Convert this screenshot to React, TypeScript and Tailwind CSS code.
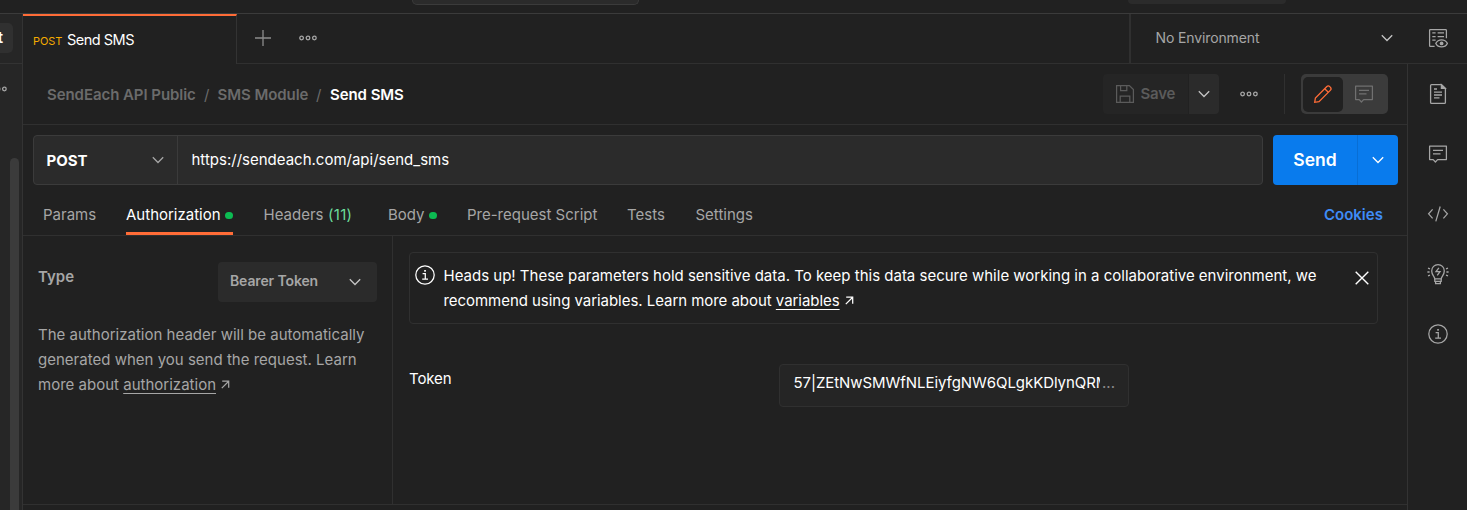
import type { ReactNode } from "react";

type IconProps = { className?: string };

function Chevron({ className = "text-[#c4c4c4]" }: IconProps) {
  return (
    <svg width="12" height="8" viewBox="0 0 12 8" fill="none" stroke="currentColor" strokeWidth="1.3" className={`shrink-0 ${className}`}>
      <path d="M0.8 1.2 L6 6.5 L11.2 1.2" />
    </svg>
  );
}

function Dots({ className = "text-[#a6a6a6]" }: IconProps) {
  return (
    <svg width="18" height="6" viewBox="0 0 18 6" fill="none" stroke="currentColor" strokeWidth="1.3" className={`shrink-0 ${className}`}>
      <circle cx="2.6" cy="3" r="1.8" />
      <circle cx="9" cy="3" r="1.8" />
      <circle cx="15.4" cy="3" r="1.8" />
    </svg>
  );
}

function CommentIcon({ className = "text-[#a6a6a6]" }: IconProps) {
  return (
    <svg width="20" height="20" viewBox="0 0 20 20" fill="none" stroke="currentColor" strokeWidth="1.25" strokeLinejoin="round" className={`shrink-0 ${className}`}>
      <path d="M1.6 2.1 H18.4 V15.6 H9.6 L7.4 18 L5.2 15.6 H1.6 Z" />
      <path d="M5 6.3 H15 M5 9.9 H12.5" />
    </svg>
  );
}

function InfoIcon({ className = "text-[#a6a6a6]" }: IconProps) {
  return (
    <svg width="20" height="20" viewBox="0 0 20 20" fill="none" stroke="currentColor" strokeWidth="1.25" className={`shrink-0 ${className}`}>
      <circle cx="10" cy="10" r="9.2" />
      <path d="M7.6 8.7 H10.3 V13.8 M7.2 14 H13" />
      <rect x="9.2" y="5" width="1.7" height="1.7" fill="currentColor" stroke="none" />
    </svg>
  );
}

function DocumentIcon() {
  return (
    <svg width="20" height="22" viewBox="0 0 20 22" fill="none" stroke="currentColor" strokeWidth="1.3" className="text-[#a6a6a6]">
      <path d="M3.6 1.6 H13.4 L17.4 5.6 V19.4 Q17.4 20.4 16.4 20.4 H3.6 Q2.6 20.4 2.6 19.4 V2.6 Q2.6 1.6 3.6 1.6 Z" />
      <path d="M13.4 1.8 V5.4 H17.2 Z" fill="currentColor" />
      <path d="M6 6 H9 M6 9.2 H14 M6 12 H14 M6 14.8 H11.5" />
    </svg>
  );
}

function CodeIcon() {
  return (
    <svg width="22" height="18" viewBox="0 0 22 18" fill="none" stroke="currentColor" strokeWidth="1.25" className="text-[#a6a6a6]">
      <path d="M5.6 4.3 L1.6 8.8 L5.6 13.3 M16.4 4.3 L20.4 8.8 L16.4 13.3 M13.2 1.5 L8.8 16.4" />
    </svg>
  );
}

function BulbIcon() {
  return (
    <svg width="22" height="22" viewBox="0 0 22 22" fill="none" stroke="currentColor" strokeWidth="1.3" className="text-[#a6a6a6]">
      <path d="M7.8 15.9 C7.8 13.4 4.7 12.3 4.7 8 C4.7 4.2 7.5 1.6 11 1.6 C14.5 1.6 17.3 4.2 17.3 8 C17.3 12.3 14.2 13.4 14.2 15.9 Z" />
      <path d="M7.8 16 V18.4 H14.2 V16 M8.6 18.6 V20.6 H13.4 V18.6" />
      <path d="M11.9 4.8 L9 8.6 H13 L10.2 12.4" />
      <path d="M1 5.2 L3 5.8 M0.4 9 H2.6 M1 12.8 L3 12.2 M21 5.2 L19 5.8 M21.6 9 H19.4 M21 12.8 L19 12.2" />
    </svg>
  );
}

function EnvironmentIcon() {
  return (
    <svg width="20" height="20" viewBox="0 0 20 20" fill="none" stroke="currentColor" strokeWidth="1.25" className="text-[#a6a6a6]">
      <path d="M6.6 18.4 H2.4 Q1.6 18.4 1.6 17.6 V2.4 Q1.6 1.6 2.4 1.6 H17.6 Q18.4 1.6 18.4 2.4 V10.2" />
      <path d="M4.3 4.9 H7.6 M9.6 4.9 H16 M4.3 8.5 H7.6 M9.6 8.5 H16 M4.3 12.1 H7.6" />
      <path d="M7.8 15.4 C10.2 10.7 17 10.7 19.4 15.4 C17 20.1 10.2 20.1 7.8 15.4 Z" />
      <circle cx="13.6" cy="15.4" r="1.9" fill="currentColor" stroke="none" />
    </svg>
  );
}

function SaveIcon() {
  return (
    <svg width="20" height="20" viewBox="0 0 20 20" fill="none" stroke="currentColor" strokeWidth="1.25" className="shrink-0">
      <path d="M1.6 1.6 H14.4 L18.4 5.6 V18.4 H1.6 Z" />
      <path d="M5.6 1.6 V6.6 H11.8 V1.6 M5.2 18.4 V12.2 H14.8 V18.4" />
    </svg>
  );
}

function PencilIcon() {
  return (
    <svg width="20" height="20" viewBox="0 0 20 20" fill="none" stroke="currentColor" strokeWidth="1.3" className="text-[#ff6c37]">
      <path d="M1.7 18.3 L2.4 14 L13.9 2.5 C15.7 0.7 19.3 4.1 17.5 6.1 L6 17.6 Z" />
      <path d="M11.7 4.7 L15.3 8.3" />
    </svg>
  );
}

function ExternalArrow({ className = "" }: IconProps) {
  return (
    <svg width="9" height="9" viewBox="0 0 9 9" fill="none" stroke="currentColor" strokeWidth="1.25" className={`mb-[3px] ml-[5px] inline-block ${className}`}>
      <path d="M1.2 1.2 H7.7 V7.8 M7.7 1.2 L0.8 8.1" />
    </svg>
  );
}

function Tab({ className, children }: { className: string; children: ReactNode }) {
  return <div className={`flex h-[50px] shrink-0 items-center whitespace-nowrap pt-[10px] ${className}`}>{children}</div>;
}

function StatusDot() {
  return <span className="ml-[4.5px] mt-px size-[7.5px] rounded-full bg-[#0cbb52]" />;
}

function Sidebar() {
  return (
    <aside className="flex w-[23px] shrink-0 flex-col border-r border-[#333333] bg-[#262626]">
      <div className="flex h-[50px] items-start overflow-hidden border-b border-[#333333] pt-[9px]">
        <div className="flex h-[30px] w-[13px] items-center justify-end rounded-r-[5px] bg-[#303030] pr-[10px] text-[15px] font-semibold text-white">
          t
        </div>
      </div>
      <div className="flex h-[50px] w-[7px] items-center justify-end overflow-hidden">
        <Dots />
      </div>
      <div className="ml-[10px] mt-[44px] w-[9px] flex-1 rounded-t-[5px] bg-[#3b3b3b]" />
    </aside>
  );
}

function TabBar() {
  return (
    <div className="flex h-[50px] shrink-0">
      <div className="flex w-[214px] items-center border-r border-t-2 border-r-[#333333] border-t-[#ff6c37] pl-[10px]">
        <span className="w-[34px] pt-[2px] text-[11px] tracking-[-0.1px] text-[#f5ab00]">POST</span>
        <span className="text-[14.5px] tracking-[-0.5px] text-white">Send SMS</span>
      </div>
      <div className="flex flex-1 items-center border-b border-[#303030] pb-px pl-[18px]">
        <svg width="16" height="16" viewBox="0 0 16 16" stroke="#8c8c8c" strokeWidth="1.3">
          <path d="M8 0 V16 M0 8 H16" />
        </svg>
        <Dots className="ml-[28px] text-[#a6a6a6]" />
      </div>
      <div className="flex w-[338px] items-center border-b border-l-2 border-[#303030] pb-[2px] pl-[24.5px]">
        <span className="w-[225.5px] text-[14px] tracking-[-0.12px] text-[#a6a6a6]">No Environment</span>
        <Chevron />
        <span className="ml-[35px]">
          <EnvironmentIcon />
        </span>
      </div>
    </div>
  );
}

function RequestHeader() {
  return (
    <div className="flex h-[61px] shrink-0 items-center border-b border-[#303030] pl-6">
      <nav className="flex flex-1 pt-[2px] text-[15px] font-semibold tracking-[-0.06px] text-[#6b6b6b]">
        <span className="w-[157px]">SendEach API Public</span>
        <span className="w-[13.5px] font-normal">/</span>
        <span className="w-[98.5px]">SMS Module</span>
        <span className="w-[14px] font-normal">/</span>
        <span className="text-white">Send SMS</span>
      </nav>
      <div className="flex h-10 w-[85px] items-center gap-[5.5px] rounded-l-[4px] bg-[#252525] pl-3 text-[15px] font-semibold tracking-[-0.2px] text-[#5b5b5b]">
        <SaveIcon />
        Save
      </div>
      <div className="ml-px flex h-10 w-[30px] items-center justify-center rounded-r-[4px] bg-[#2b2b2b]">
        <Chevron />
      </div>
      <Dots className="ml-[21px] text-[#a6a6a6]" />
      <div className="ml-[26px] h-10 w-px bg-[#303030]" />
      <div className="ml-4 mr-[19px] flex h-10 w-[87px] items-center rounded-[5px] bg-[#3b3b3b] pl-[2px]">
        <div className="flex h-[35px] w-10 items-center justify-center rounded-[5px] bg-[#212121]">
          <PencilIcon />
        </div>
        <div className="flex w-[42px] justify-center">
          <CommentIcon className="text-[#707070]" />
        </div>
      </div>
    </div>
  );
}

function UrlBar() {
  return (
    <div className="flex h-[60px] shrink-0 pl-[10px] pr-[9px] pt-[10px]">
      <div className="flex h-[50px] w-[1230px] rounded-[4px] border border-[#3b3b3b] bg-[#2b2b2b]">
        <div className="flex w-[144px] items-center border-r border-[#3b3b3b] pl-[12.5px]">
          <span className="w-[105.5px] pt-[2px] text-[15px] font-bold text-white">POST</span>
          <Chevron className="text-[#a6a6a6]" />
        </div>
        <div className="flex items-center pl-[13.5px] pt-px text-[15px] text-white">https://sendeach.com/api/send_sms</div>
      </div>
      <div className="ml-[10px] flex h-[50px] w-[125px] rounded-[4px] bg-[#097bed]">
        <div className="flex w-[85px] items-center justify-center border-r border-[#086ed5] text-[17.5px] font-semibold text-white">Send</div>
        <div className="flex flex-1 items-center justify-center">
          <Chevron className="text-white" />
        </div>
      </div>
    </div>
  );
}

function RequestTabs() {
  return (
    <div className="flex h-[51px] shrink-0 border-b border-[#303030] pl-5 text-[15px] text-[#a6a6a6]">
      <Tab className="w-[83px]">Params</Tab>
      <Tab className="relative w-[137.5px] text-white">
        Authorization
        <StatusDot />
        <span className="absolute bottom-0 left-0 h-[3px] w-[107px] bg-[#ff6c37]" />
      </Tab>
      <Tab className="w-[124.5px]">
        <span className="w-[64.5px]">Headers</span>
        <span className="tracking-[0.3px] text-[#6bdd9a]">(11)</span>
      </Tab>
      <Tab className="w-[79px]">
        Body
        <StatusDot />
      </Tab>
      <Tab className="w-[160px]">Pre-request Script</Tab>
      <Tab className="w-[68.5px]">Tests</Tab>
      <Tab className="flex-1">Settings</Tab>
      <Tab className="w-[83px] font-semibold text-[#3f8cf7]">Cookies</Tab>
    </div>
  );
}

function AuthorizationPanel() {
  return (
    <div className="flex h-[269px] shrink-0 border-b border-[#303030]">
      <section className="w-[370px] border-r border-[#303030] pl-[15px] text-[15px] text-[#a6a6a6]">
        <div className="flex h-[86px] pt-[26px]">
          <span className="w-[180px] pt-[4px] font-semibold">Type</span>
          <div className="flex h-10 w-[159px] items-center rounded-[4px] bg-[#2b2b2b] pl-3">
            <span className="w-[119px] pb-[3px] text-[14px] font-semibold tracking-[-0.12px]">Bearer Token</span>
            <Chevron />
          </div>
        </div>
        <p className="whitespace-nowrap leading-[25px] tracking-[0.01px]">
          The authorization header will be automatically
          <br />
          generated when you send the request. Learn
          <br />
          more about <span className="underline decoration-1 underline-offset-[2.5px] [text-decoration-skip-ink:none]">authorization</span>
          <ExternalArrow />
        </p>
      </section>
      <section className="flex-1 pl-4 pt-4 text-[15px] text-white">
        <div className="flex h-[72px] w-[969px] rounded-[4px] border border-[#303030] pl-[5px]">
          <InfoIcon className="mt-[12px] text-white" />
          <p className="ml-[8.5px] mt-[10px] w-[911.5px] whitespace-nowrap leading-[25px]">
            Heads up! These parameters hold sensitive data. To keep this data secure while working in a collaborative environment, we
            <br />
            <span className="tracking-[-0.045px]">
              recommend using variables. Learn more about{" "}
              <span className="underline decoration-1 underline-offset-[2.5px] [text-decoration-skip-ink:none]">variables</span>
            </span>
            <ExternalArrow />
          </p>
          <svg width="14" height="14" viewBox="0 0 14 14" stroke="currentColor" strokeWidth="1.4" className="mt-[18px] shrink-0">
            <path d="M0.7 0.7 L13.3 13.3 M13.3 0.7 L0.7 13.3" />
          </svg>
        </div>
        <div className="mt-10 flex">
          <span className="w-[370px] pt-[4px] tracking-[-0.1px]">Token</span>
          <div className="flex h-[43px] w-[350px] rounded-[4px] border border-[#303030] bg-[#252525] pl-[13.5px] pt-[7px]">
            <span className="w-[306.5px] overflow-hidden whitespace-nowrap tracking-[-0.06px]">57|ZEtNwSMWfNLEiyfgNW6QLgkKDlynQRM</span>
            <span className="ml-[2px] text-[#8c8c8c]">...</span>
          </div>
        </div>
      </section>
    </div>
  );
}

function RightRail() {
  return (
    <aside className="flex w-[60px] shrink-0 flex-col border-l border-[#333333]">
      {[DocumentIcon, CommentIcon, CodeIcon, BulbIcon, InfoIcon].map((Icon, index) => (
        <div key={index} className="flex h-[60px] items-center justify-center pl-px">
          <Icon />
        </div>
      ))}
    </aside>
  );
}

export default function App() {
  return (
    <div className="flex h-[510px] w-[1467px] flex-col overflow-hidden bg-[#212121] font-['Inter',sans-serif] text-[15px]">
      <header className="flex h-[14px] shrink-0 items-start border-b border-[#3b3b3b]">
        <div className="ml-[412px] h-[5px] w-[227px] rounded-b-[5px] border border-t-0 border-[#3b3b3b] bg-[#2b2b2b]" />
        <div className="ml-[489px] h-[4px] w-[158px] rounded-b-[4px] bg-[#2b2b2b]" />
      </header>
      <div className="flex min-h-0 flex-1">
        <Sidebar />
        <div className="flex min-w-0 flex-1 flex-col">
          <TabBar />
          <div className="flex min-h-0 flex-1">
            <main className="flex w-[1384px] shrink-0 flex-col">
              <RequestHeader />
              <UrlBar />
              <RequestTabs />
              <AuthorizationPanel />
            </main>
            <RightRail />
          </div>
        </div>
      </div>
    </div>
  );
}
